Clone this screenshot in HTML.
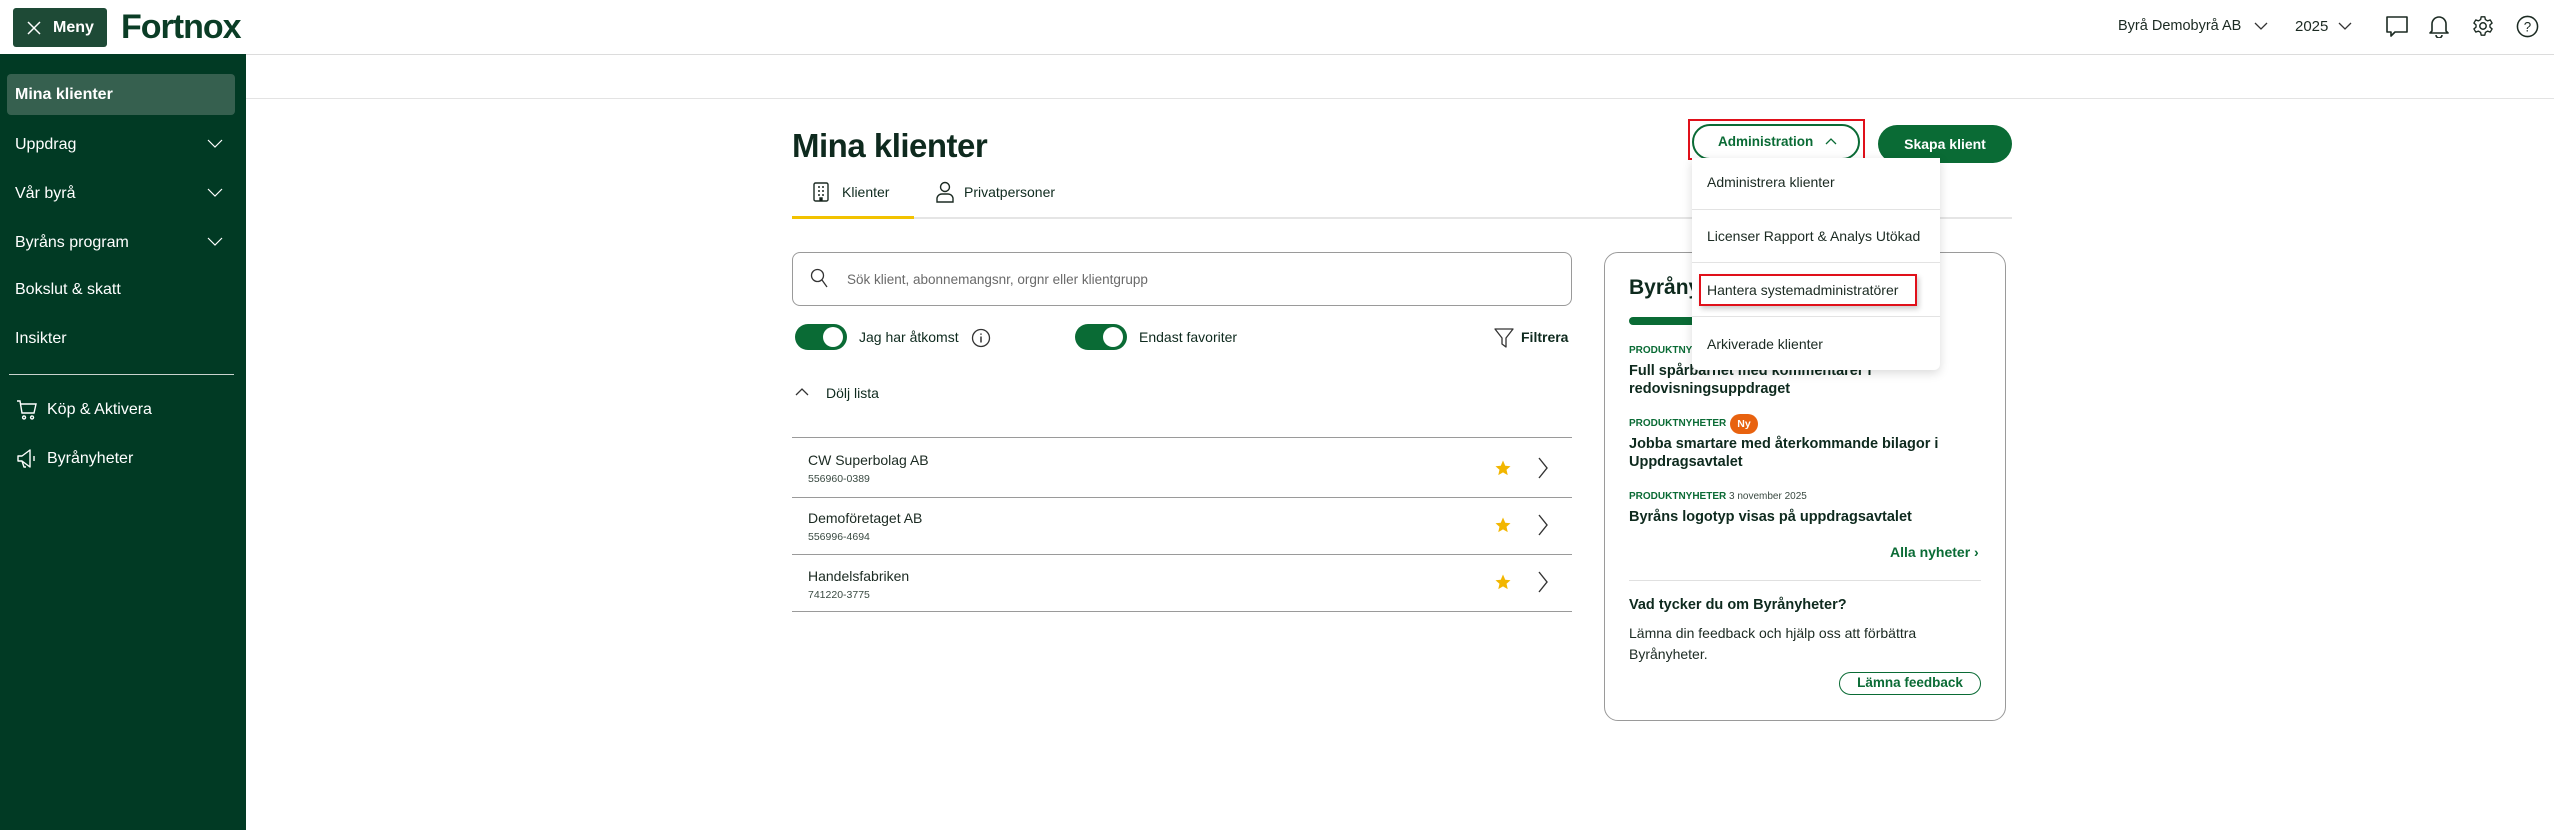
<!DOCTYPE html>
<html><head><meta charset="utf-8"><style>
*{box-sizing:border-box;margin:0;padding:0}
body{width:2554px;height:830px;position:relative;overflow:hidden;background:#fff;font-family:"Liberation Sans",sans-serif;color:#0e2a1e}
.a{position:absolute;white-space:nowrap}
.sb{position:absolute;left:0;top:54px;width:246px;height:776px;background:#013a24}
.si{position:absolute;left:15px;color:#fff;font-size:16px;transform:translateY(-50%)}
.chev{position:absolute;left:207px;width:16px;height:10px}
.dd{position:absolute;left:1692px;top:158px;width:248px;height:212px;background:#fff;box-shadow:0 3px 10px rgba(0,0,0,.15);border-radius:0 0 6px 6px}
.di{position:absolute;left:15px;font-size:14px;color:#1b2a22;transform:translateY(-50%)}
.dl{position:absolute;left:0;width:248px;height:1px;background:#e3e3e3}
.lab{font-size:10px;font-weight:bold;color:#0a6b35}
.hl{font-size:14.5px;font-weight:bold;color:#0e2a1e;line-height:18px}
.row{font-size:14px;color:#1b2a22}
.num{font-size:10.5px;color:#3a4a42}
.hr{position:absolute;left:792px;width:780px;height:1px;background:#9a9a9a}
</style></head><body>
<!-- header -->
<div class="a" style="left:13px;top:8px;width:94px;height:39px;background:#1e4a36;border-radius:3px"></div>
<svg class="a" style="left:26px;top:20px" width="16" height="16" viewBox="0 0 16 16"><path d="M2 2L14 14M14 2L2 14" stroke="#fff" stroke-width="1.5"/></svg>
<div class="a" style="left:53px;top:19px;color:#fff;font-weight:bold;font-size:16px">Meny</div>
<div class="a" style="left:121px;top:8px;font-size:34px;font-weight:bold;color:#0b3d26;letter-spacing:-1px">Fortnox</div>
<div class="a" style="left:2118px;top:18px;font-size:14.5px;color:#1b2a22">Byrå Demobyrå AB</div>
<svg class="a" style="left:2254px;top:22px" width="14" height="9"><path d="M1 1L7 7L13 1" stroke="#333" stroke-width="1.3" fill="none"/></svg>
<div class="a" style="left:2295px;top:18px;font-size:15px;color:#1b2a22">2025</div>
<svg class="a" style="left:2338px;top:22px" width="14" height="9"><path d="M1 1L7 7L13 1" stroke="#333" stroke-width="1.3" fill="none"/></svg>
<svg class="a" style="left:2385px;top:15px" width="24" height="24" viewBox="0 0 24 24"><path d="M2 2H22V17H10L6 21V17H2Z" stroke="#1b2a22" stroke-width="1.6" fill="none" stroke-linejoin="round"/></svg>
<svg class="a" style="left:2428px;top:14px" width="22" height="24" viewBox="0 0 22 24"><path d="M4 17V10A7 7 0 0 1 18 10V17L20 19H2Z M8 21A3 3 0 0 0 14 21" stroke="#1b2a22" stroke-width="1.6" fill="none" stroke-linejoin="round"/></svg>
<svg class="a" style="left:2472px;top:15px" width="22" height="22" viewBox="0 0 24 24"><circle cx="12" cy="12" r="3.5" stroke="#1b2a22" stroke-width="1.6" fill="none"/><path d="M10 2h4l.6 3 2.4 1.4 2.9-1 2 3.4-2.3 2v2.4l2.3 2-2 3.4-2.9-1-2.4 1.4-.6 3h-4l-.6-3-2.4-1.4-2.9 1-2-3.4 2.3-2v-2.4l-2.3-2 2-3.4 2.9 1L9.4 5z" stroke="#1b2a22" stroke-width="1.5" fill="none" stroke-linejoin="round"/></svg>
<svg class="a" style="left:2516px;top:15px" width="23" height="23" viewBox="0 0 24 24"><circle cx="12" cy="12" r="10.5" stroke="#1b2a22" stroke-width="1.6" fill="none"/><text x="12" y="17" font-size="14" text-anchor="middle" fill="#1b2a22" font-family="Liberation Sans">?</text></svg>
<div class="a" style="left:0;top:54px;width:2554px;height:1px;background:#dcdcdc"></div>
<div class="a" style="left:246px;top:98px;width:2308px;height:1px;background:#e3e3e3"></div>
<!-- sidebar -->
<div class="sb"></div>
<div class="a" style="left:7px;top:74px;width:228px;height:41px;background:#36604f;border-radius:4px"></div>
<div class="si" style="top:95px;font-weight:bold">Mina klienter</div>
<div class="si" style="top:145px">Uppdrag</div>
<div class="si" style="top:194px">Vår byrå</div>
<div class="si" style="top:243px">Byråns program</div>
<div class="si" style="top:290px">Bokslut &amp; skatt</div>
<div class="si" style="top:339px">Insikter</div>
<svg class="chev" style="top:139px"><path d="M1 1L8 8L15 1" stroke="#fff" stroke-width="1.2" fill="none"/></svg>
<svg class="chev" style="top:188px"><path d="M1 1L8 8L15 1" stroke="#fff" stroke-width="1.2" fill="none"/></svg>
<svg class="chev" style="top:237px"><path d="M1 1L8 8L15 1" stroke="#fff" stroke-width="1.2" fill="none"/></svg>
<div class="a" style="left:9px;top:374px;width:225px;height:1px;background:#c9d3ce"></div>
<svg class="a" style="left:16px;top:400px" width="22" height="20" viewBox="0 0 22 20"><path d="M1 1H4L6 13H18L20 4H5 M8 16a1.5 1.5 0 1 0 .1 0 M16 16a1.5 1.5 0 1 0 .1 0" stroke="#fff" stroke-width="1.4" fill="none"/></svg>
<div class="si" style="top:410px;left:47px">Köp &amp; Aktivera</div>
<svg class="a" style="left:16px;top:449px" width="22" height="20" viewBox="0 0 22 20"><path d="M2 7V12H6L14 18V1L6 7Z M6 12L8 18H10 M18 7V12" stroke="#fff" stroke-width="1.4" fill="none" stroke-linejoin="round"/></svg>
<div class="si" style="top:459px;left:47px">Byrånyheter</div>
<!-- main -->
<div class="a" style="left:792px;top:127px;font-size:33px;font-weight:bold;color:#0e2a1e;letter-spacing:-.5px">Mina klienter</div>
<svg class="a" style="left:813px;top:182px" width="16" height="20" viewBox="0 0 16 20"><rect x="1" y="1" width="14" height="18" rx="1.5" stroke="#1b2a22" stroke-width="1.4" fill="none"/><path d="M5 5h2M9 5h2M5 9h2M9 9h2M5 13h2M9 13h2M7 19v-3h2v3" stroke="#1b2a22" stroke-width="1.4"/></svg>
<div class="a" style="left:842px;top:184px;font-size:14px">Klienter</div>
<svg class="a" style="left:936px;top:181px" width="18" height="22" viewBox="0 0 18 22"><circle cx="9" cy="6" r="4.5" stroke="#1b2a22" stroke-width="1.4" fill="none"/><path d="M1 21V17A5 5 0 0 1 6 13H12A5 5 0 0 1 17 17V21Z" stroke="#1b2a22" stroke-width="1.4" fill="none"/></svg>
<div class="a" style="left:964px;top:184px;font-size:14px">Privatpersoner</div>
<div class="a" style="left:792px;top:217px;width:1220px;height:2px;background:#e5e5e5"></div>
<div class="a" style="left:792px;top:216px;width:122px;height:3px;background:#f2c200"></div>
<div class="a" style="left:1688px;top:119px;width:177px;height:41px;border:2px solid #e0101a"></div>
<div class="a" style="left:1692px;top:124px;width:168px;height:36px;border:2px solid #0a6b35;border-radius:18px"></div>
<div class="a" style="left:1718px;top:134px;font-size:13.5px;font-weight:bold;color:#0a6b35">Administration</div>
<svg class="a" style="left:1825px;top:137px" width="12" height="8"><path d="M1 7L6 2L11 7" stroke="#0a6b35" stroke-width="1.3" fill="none"/></svg>
<div class="a" style="left:1878px;top:125px;width:134px;height:38px;background:#0a6b35;border-radius:19px;color:#fff;font-weight:bold;font-size:14px;text-align:center;line-height:38px">Skapa klient</div>
<!-- search -->
<div class="a" style="left:792px;top:252px;width:780px;height:54px;border:1.5px solid #9a9a9a;border-radius:8px"></div>
<svg class="a" style="left:810px;top:268px" width="18" height="20" viewBox="0 0 18 20"><circle cx="7.5" cy="7.5" r="6" stroke="#333" stroke-width="1.3" fill="none"/><path d="M12 12L17 19" stroke="#333" stroke-width="1.3"/></svg>
<div class="a" style="left:847px;top:272px;font-size:13.5px;color:#6a6a6a">Sök klient, abonnemangsnr, orgnr eller klientgrupp</div>
<!-- toggles -->
<div class="a" style="left:795px;top:324px;width:52px;height:26px;background:#0a6b35;border-radius:13px"></div>
<div class="a" style="left:823px;top:327px;width:20px;height:20px;background:#fff;border-radius:50%"></div>
<div class="a" style="left:859px;top:329px;font-size:14px">Jag har åtkomst</div>
<svg class="a" style="left:971px;top:328px" width="20" height="20"><circle cx="10" cy="10" r="8.5" stroke="#333" stroke-width="1.3" fill="none"/><path d="M10 8.5V14.5M10 5.5V6.8" stroke="#333" stroke-width="1.5"/></svg>
<div class="a" style="left:1075px;top:324px;width:52px;height:26px;background:#0a6b35;border-radius:13px"></div>
<div class="a" style="left:1103px;top:327px;width:20px;height:20px;background:#fff;border-radius:50%"></div>
<div class="a" style="left:1139px;top:329px;font-size:14px">Endast favoriter</div>
<svg class="a" style="left:1494px;top:327px" width="20" height="22" viewBox="0 0 20 22"><path d="M1 2H19L12 11V20L8 17V11Z" stroke="#333" stroke-width="1.3" fill="none" stroke-linejoin="round"/></svg>
<div class="a" style="left:1521px;top:329px;font-size:14px;font-weight:bold">Filtrera</div>
<svg class="a" style="left:795px;top:387px" width="14" height="9"><path d="M1 8L7 2L13 8" stroke="#333" stroke-width="1.3" fill="none"/></svg>
<div class="a" style="left:826px;top:385px;font-size:14px">Dölj lista</div>
<div class="hr" style="top:437px"></div><div class="hr" style="top:497px"></div><div class="hr" style="top:554px"></div><div class="hr" style="top:611px"></div>
<div class="a row" style="left:808px;top:452px">CW Superbolag AB</div><div class="a num" style="left:808px;top:473px">556960-0389</div>
<div class="a row" style="left:808px;top:510px">Demoföretaget AB</div><div class="a num" style="left:808px;top:531px">556996-4694</div>
<div class="a row" style="left:808px;top:568px">Handelsfabriken</div><div class="a num" style="left:808px;top:589px">741220-3775</div>
<svg class="a" style="left:1494px;top:459px" width="18" height="18" viewBox="0 0 24 24"><path d="M12 2l3 7 7 .6-5.3 4.7 1.6 7.2L12 17.8 5.7 21.5l1.6-7.2L2 9.6 9 9z" fill="#f2b600"/></svg>
<svg class="a" style="left:1494px;top:516px" width="18" height="18" viewBox="0 0 24 24"><path d="M12 2l3 7 7 .6-5.3 4.7 1.6 7.2L12 17.8 5.7 21.5l1.6-7.2L2 9.6 9 9z" fill="#f2b600"/></svg>
<svg class="a" style="left:1494px;top:573px" width="18" height="18" viewBox="0 0 24 24"><path d="M12 2l3 7 7 .6-5.3 4.7 1.6 7.2L12 17.8 5.7 21.5l1.6-7.2L2 9.6 9 9z" fill="#f2b600"/></svg>
<svg class="a" style="left:1537px;top:457px" width="12" height="22"><path d="M2 1L10 11L2 21" stroke="#333" stroke-width="1.4" fill="none"/></svg>
<svg class="a" style="left:1537px;top:514px" width="12" height="22"><path d="M2 1L10 11L2 21" stroke="#333" stroke-width="1.4" fill="none"/></svg>
<svg class="a" style="left:1537px;top:571px" width="12" height="22"><path d="M2 1L10 11L2 21" stroke="#333" stroke-width="1.4" fill="none"/></svg>
<!-- card -->
<div class="a" style="left:1604px;top:252px;width:402px;height:469px;border:1.5px solid #9a9a9a;border-radius:14px"></div>
<div class="a" style="left:1629px;top:276px;font-size:21px;font-weight:bold">Byrånyheter</div>
<div class="a" style="left:1629px;top:317px;width:120px;height:8px;background:#0a6b35;border-radius:4px"></div>
<div class="a lab" style="left:1629px;top:345px">PRODUKTNYHETER</div>
<div class="a hl" style="left:1629px;top:362px">Full spårbarhet med kommentarer i<br>redovisningsuppdraget</div>
<div class="a lab" style="left:1629px;top:418px">PRODUKTNYHETER</div>
<div class="a" style="left:1730px;top:414px;width:28px;height:20px;background:#e8620f;border-radius:10px;color:#fff;font-size:10.5px;font-weight:bold;text-align:center;line-height:20px">Ny</div>
<div class="a hl" style="left:1629px;top:435px">Jobba smartare med återkommande bilagor i<br>Uppdragsavtalet</div>
<div class="a lab" style="left:1629px;top:491px">PRODUKTNYHETER <span style="font-weight:normal;color:#3a4a42">3 november 2025</span></div>
<div class="a hl" style="left:1629px;top:508px">Byråns logotyp visas på uppdragsavtalet</div>
<div class="a" style="left:1890px;top:544px;font-size:14px;font-weight:bold;color:#0a6b35">Alla nyheter ›</div>
<div class="a" style="left:1629px;top:580px;width:352px;height:1px;background:#e0e0e0"></div>
<div class="a hl" style="left:1629px;top:596px">Vad tycker du om Byrånyheter?</div>
<div class="a" style="left:1629px;top:623px;font-size:14px;line-height:21px;color:#1b2a22">Lämna din feedback och hjälp oss att förbättra<br>Byrånyheter.</div>
<div class="a" style="left:1839px;top:672px;width:142px;height:23px;border:1.5px solid #0a6b35;border-radius:12px;text-align:center;line-height:20px;font-size:13.5px;font-weight:bold;color:#0a6b35">Lämna feedback</div>
<!-- dropdown -->
<div class="dd">
<div class="di" style="top:24px">Administrera klienter</div>
<div class="dl" style="top:51px"></div>
<div class="di" style="top:78px">Licenser Rapport &amp; Analys Utökad</div>
<div class="dl" style="top:104px"></div>
<div class="a" style="left:7px;top:116px;width:218px;height:32px;border:2px solid #e0101a;box-shadow:2px 3px 5px rgba(0,0,0,.2)"></div>
<div class="di" style="top:132px">Hantera systemadministratörer</div>
<div class="dl" style="top:158px"></div>
<div class="di" style="top:186px">Arkiverade klienter</div>
</div>
</body></html>
